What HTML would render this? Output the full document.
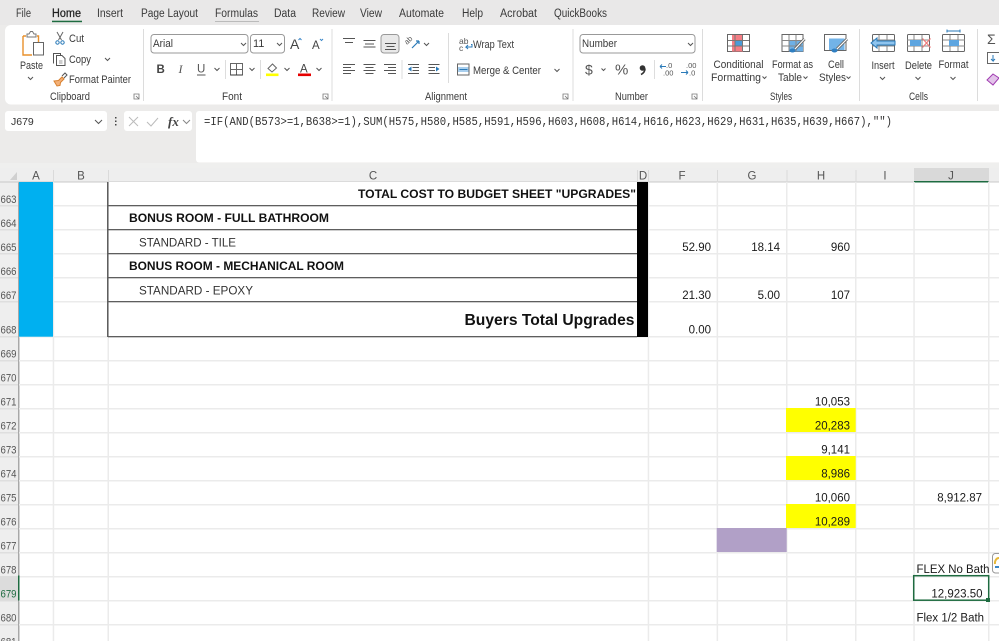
<!DOCTYPE html>
<html><head><meta charset="utf-8"><title>Excel</title>
<style>
html,body{margin:0;padding:0;background:#fff;width:999px;height:641px;overflow:hidden}
svg{display:block}
text{font-family:"Liberation Sans",Arial,sans-serif;fill:#222}
.t{font-size:11px;fill:#3a3a3a}
.tab{font-size:11.5px;fill:#3a3a3a}
.c{font-size:11.5px;fill:#1a1a1a}
.b{font-weight:bold;font-size:12px;fill:#111}
.h{font-size:11.5px;fill:#555}
.r{font-size:11px;fill:#555}
.ic{fill:none;stroke:#555;stroke-width:1}
.d{fill:none;stroke:#777;stroke-width:.8}
</style></head><body>
<svg width="999" height="641" viewBox="0 0 999 641" xmlns="http://www.w3.org/2000/svg">
<rect width="999" height="641" fill="#fff"/>
<!-- top chrome -->
<rect width="999" height="168" fill="#ecebea"/>
<rect x="0" y="0" width="999" height="25" fill="#e9e8e8"/>
<text class="tab" x="16" y="17" textLength="15" lengthAdjust="spacingAndGlyphs">File</text>
<text class="tab" x="52" y="17" textLength="29" lengthAdjust="spacingAndGlyphs" style="fill:#222;stroke:#222;stroke-width:.25">Home</text>
<rect x="52" y="20.700" width="30" height="1.500" fill="#1e6b40"/>
<text class="tab" x="97" y="17" textLength="26" lengthAdjust="spacingAndGlyphs">Insert</text>
<text class="tab" x="141" y="17" textLength="57" lengthAdjust="spacingAndGlyphs">Page Layout</text>
<text class="tab" x="215" y="17" textLength="43" lengthAdjust="spacingAndGlyphs">Formulas</text>
<rect x="215" y="21" width="44" height="1" fill="#bbb"/>
<text class="tab" x="274" y="17" textLength="22" lengthAdjust="spacingAndGlyphs">Data</text>
<text class="tab" x="312" y="17" textLength="33" lengthAdjust="spacingAndGlyphs">Review</text>
<text class="tab" x="360" y="17" textLength="22" lengthAdjust="spacingAndGlyphs">View</text>
<text class="tab" x="399" y="17" textLength="45" lengthAdjust="spacingAndGlyphs">Automate</text>
<text class="tab" x="462" y="17" textLength="21" lengthAdjust="spacingAndGlyphs">Help</text>
<text class="tab" x="500" y="17" textLength="37" lengthAdjust="spacingAndGlyphs">Acrobat</text>
<text class="tab" x="554" y="17" textLength="53" lengthAdjust="spacingAndGlyphs">QuickBooks</text>
<!-- ribbon -->
<rect x="5" y="25" width="1000" height="79.500" rx="6" fill="#fff"/>
<g fill="#dcdcdc">
<rect x="143" y="29" width="1" height="72"/><rect x="331.500" y="29" width="1" height="72"/><rect x="572.500" y="29" width="1" height="72"/>
<rect x="702" y="29" width="1" height="72"/><rect x="859" y="29" width="1" height="72"/><rect x="977" y="29" width="1" height="72"/>
<rect x="448" y="33" width="1" height="50"/>
</g>
<!-- clipboard -->
<path d="M23 36h3M37 36h1.500v6M23 36v19h9" fill="none" stroke="#e8902c" stroke-width="1.400"/>
<path d="M27 37v-3h2l1.500-2.500h2l1.500 2.500h2v3z" fill="#fff" stroke="#777"/>
<rect x="33.500" y="42.500" width="10" height="12.500" fill="#fff" stroke="#666"/>
<text class="t" x="20" y="69" textLength="23" lengthAdjust="spacingAndGlyphs">Paste</text>
<path d="M28 77l2.500 2.500 2.500-2.500" class="ic"/>
<path d="M57 32l4.500 8M63 32l-4.500 8" fill="none" stroke="#666"/><circle cx="57.500" cy="42.500" r="1.700" fill="none" stroke="#2a7ab8"/><circle cx="62.500" cy="42.500" r="1.700" fill="none" stroke="#2a7ab8"/>
<text class="t" x="69" y="42" textLength="15" lengthAdjust="spacingAndGlyphs">Cut</text>
<path d="M53.500 63.500v-10h7v2M56.500 55.500h5.500l3 3v7h-8.500z" class="ic"/><path d="M59 61h3.500M59 63h3.500" stroke="#999" fill="none"/>
<text class="t" x="69" y="63" textLength="22" lengthAdjust="spacingAndGlyphs">Copy</text>
<path d="M105 58l2.500 2.500 2.500-2.500" class="ic"/>
<path d="M54 81l4.500-.5 3.500-3.500 2 2-3.500 3.500-.5 3-3 .5z" fill="#f3b179" stroke="#d9802e"/><path d="M62 76l3-3 2 2-3 3" fill="none" stroke="#555"/>
<text class="t" x="69" y="83" textLength="62" lengthAdjust="spacingAndGlyphs">Format Painter</text>
<text class="t" x="50" y="100" textLength="40" lengthAdjust="spacingAndGlyphs">Clipboard</text>
<path d="M134 94h5v5h-5zM136 96l3 3" class="d"/>
<!-- font -->
<rect x="151" y="34.500" width="97" height="18.500" rx="3" fill="#fff" stroke="#999"/>
<text class="t" x="153" y="47" textLength="20" lengthAdjust="spacingAndGlyphs">Arial</text>
<path d="M241 43l2.500 2.500 2.500-2.500" class="ic"/>
<rect x="250.500" y="34.500" width="34" height="18.500" rx="3" fill="#fff" stroke="#999"/>
<text class="t" x="253" y="47">11</text>
<path d="M277 43l2.500 2.500 2.500-2.500" class="ic"/>
<text x="290" y="49" style="font-size:14px;fill:#444">A</text><path d="M298.500 40l1.500-1.500 1.500 1.500" fill="none" stroke="#3a87c8"/>
<text x="312" y="49" style="font-size:11.500px;fill:#444">A</text><path d="M320 39l1.500 1.500 1.500-1.500" fill="none" stroke="#3a87c8"/>
<text x="156.500" y="73" style="font-size:11.500px;font-weight:bold;fill:#444">B</text>
<text x="178.500" y="73" style="font-size:12px;font-style:italic;fill:#555;font-family:'Liberation Serif',serif">I</text>
<text x="197" y="72.500" style="font-size:11.500px;fill:#555">U</text><rect x="197" y="74.500" width="8.500" height="1" fill="#555"/>
<path d="M214.500 68l2.500 2.500 2.500-2.500M249.500 68l2.500 2.500 2.500-2.500M284.500 68l2.500 2.500 2.500-2.500M316.500 68l2.500 2.500 2.500-2.500" class="ic"/>
<rect x="225" y="60" width="1" height="19" fill="#ddd"/><rect x="260" y="60" width="1" height="19" fill="#ddd"/>
<path d="M230.500 63.500h12v11.500h-12zM236.500 63.500v11.500M230.500 69.500h12" fill="none" stroke="#666"/><path d="M230.500 75h12" stroke="#333"/>
<path d="M268 68.500l4.500-4.500 4 4-4.500 4z" fill="#fff" stroke="#666"/>
<rect x="266" y="73.500" width="12.500" height="2.600" fill="#ffff00"/>
<text x="300" y="72.500" style="font-size:11.500px;fill:#444">A</text><rect x="298" y="73.500" width="13" height="2.600" fill="#e60000"/>
<text class="t" x="222" y="100" textLength="20" lengthAdjust="spacingAndGlyphs">Font</text>
<path d="M323 94h5v5h-5zM325 96l3 3" class="d"/>
<!-- alignment -->
<path d="M343 38.500h12M345 42.500h8M363.500 40.500h12M365 44h9M363.500 47h12" class="ic"/>
<rect x="381" y="34.500" width="18" height="18.500" rx="3" fill="#e9e9e9" stroke="#999"/>
<path d="M385 43.500h11M386.500 46.500h8M385 49.500h11" class="ic"/>
<path d="M343 64.500h12M343 67.500h8M343 70.500h12M343 73.500h8M363.500 64.500h12M365.500 67.500h8M363.500 70.500h12M365.500 73.500h8M384 64.500h12M388 67.500h8M384 70.500h12M388 73.500h8" class="ic"/>
<path d="M408 64.500h11M412.500 67.500h6.500M412.500 70.500h6.500M408 73.500h11M428.500 64.500h11M428.500 67.500h6.500M428.500 70.500h6.500M428.500 73.500h11" class="ic"/>
<path d="M408 69l3.500-2.500v5zM439.500 69l-3.500-2.500v5z" fill="#2a7ab8"/>
<rect x="401.500" y="60" width="1" height="19" fill="#ddd"/>
<path d="M412 48l7-7M419 41h-3M419 41v3" fill="none" stroke="#2a7ab8" stroke-width="1.200"/>
<text x="407" y="45" transform="rotate(-45 407 45)" style="font-size:7.500px;fill:#555">ab</text>
<path d="M424 43l2.500 2.500 2.500-2.500" class="ic"/>
<text x="459" y="44" style="font-size:8.500px;fill:#555">ab</text><text x="459" y="51" style="font-size:8.500px;fill:#555">c</text>
<path d="M471 44.500h1v2.500h-6l2-2M466 47l2 2" fill="none" stroke="#2a7ab8"/>
<text class="t" x="473" y="48" textLength="41" lengthAdjust="spacingAndGlyphs">Wrap Text</text>
<rect x="457.500" y="64" width="11.500" height="11" fill="#fff" stroke="#666"/><rect x="458" y="67" width="10.500" height="5" fill="#a9cfee"/><path d="M459.500 69.500h8" stroke="#2a7ab8"/>
<text class="t" x="473" y="74" textLength="68" lengthAdjust="spacingAndGlyphs">Merge &amp; Center</text>
<path d="M554.500 69l2.500 2.500 2.500-2.500" class="ic"/>
<text class="t" x="425" y="100" textLength="42" lengthAdjust="spacingAndGlyphs">Alignment</text>
<path d="M563 94h5v5h-5zM565 96l3 3" class="d"/>
<!-- number -->
<rect x="580" y="34.500" width="115" height="18.500" rx="3" fill="#fff" stroke="#999"/>
<text class="t" x="582" y="47" textLength="35" lengthAdjust="spacingAndGlyphs">Number</text>
<path d="M688 43l2.500 2.500 2.500-2.500" class="ic"/>
<text x="585" y="74.500" style="font-size:14px;fill:#555">$</text>
<path d="M601.500 68.500l2 2 2-2" class="ic"/>
<text x="615" y="74.500" style="font-size:15px;fill:#555">%</text>
<circle cx="642.500" cy="68" r="2.800" fill="#333"/><path d="M645 68.500q0 4-4 6" fill="none" stroke="#333" stroke-width="1.600"/>
<rect x="654" y="60" width="1" height="19" fill="#ddd"/>
<text x="666" y="68" style="font-size:7.500px;fill:#555">.0</text><text x="663" y="75.500" style="font-size:7.500px;fill:#555">.00</text><path d="M660 66.500h6M660 66.500l2-2M660 66.500l2 2" fill="none" stroke="#2a7ab8"/>
<text x="686" y="68" style="font-size:7.500px;fill:#555">.00</text><text x="689" y="75.500" style="font-size:7.500px;fill:#555">.0</text><path d="M681 72.500h7M688 72.500l-2-2M688 72.500l-2 2" fill="none" stroke="#2a7ab8"/>
<text class="t" x="615" y="100" textLength="33" lengthAdjust="spacingAndGlyphs">Number</text>
<path d="M692 94h5v5h-5zM694 96l3 3" class="d"/>
<!-- styles -->
<rect x="727.500" y="34.500" width="22" height="17" fill="#fff" stroke="#666"/>
<rect x="732" y="35" width="10" height="5.500" fill="#f47d84"/><rect x="732" y="46" width="11" height="5.500" fill="#f47d84"/><rect x="732" y="40.500" width="3" height="5.500" fill="#f47d84"/><rect x="735" y="41" width="7" height="4.500" fill="#4a9bd8"/>
<path d="M735 35v16M742.500 35v16M728 40.500h21M728 46h21" stroke="#777" fill="none"/>
<rect x="782" y="34.500" width="21" height="17" fill="#fff" stroke="#666"/>
<rect x="789" y="41" width="14" height="10.500" fill="#6eb0e6"/>
<path d="M789 35v16M796 35v16M782 40.500h21M782 46h21" stroke="#888" fill="none"/>
<path d="M795 49l9.500-10" stroke="#666" stroke-width="3"/><path d="M795 49l9.500-10" stroke="#fff" stroke-width="1.200"/><ellipse cx="792.500" cy="50.500" rx="3" ry="2" fill="#2f7fc2"/>
<rect x="824.500" y="34.500" width="21.500" height="16" fill="#fff" stroke="#666"/>
<rect x="829" y="38.500" width="15.500" height="11.500" fill="#72b3e8"/>
<path d="M837 49l10-10" stroke="#666" stroke-width="3"/><path d="M837 49l10-10" stroke="#fff" stroke-width="1.200"/><ellipse cx="834.500" cy="50.500" rx="3" ry="2" fill="#2f7fc2"/>
<text class="t" x="713.500" y="68" textLength="50" lengthAdjust="spacingAndGlyphs">Conditional</text>
<text class="t" x="711" y="81" textLength="50" lengthAdjust="spacingAndGlyphs">Formatting</text><path d="M762.500 76.500l2 2 2-2" class="ic"/>
<text class="t" x="772" y="68" textLength="41" lengthAdjust="spacingAndGlyphs">Format as</text>
<text class="t" x="778" y="81" textLength="24" lengthAdjust="spacingAndGlyphs">Table</text><path d="M803.500 76.500l2 2 2-2" class="ic"/>
<text class="t" x="828" y="68" textLength="16" lengthAdjust="spacingAndGlyphs">Cell</text>
<text class="t" x="819" y="81" textLength="27" lengthAdjust="spacingAndGlyphs">Styles</text><path d="M846.500 76.500l2 2 2-2" class="ic"/>
<text class="t" x="770" y="100" textLength="22" lengthAdjust="spacingAndGlyphs">Styles</text>
<!-- cells -->
<rect x="872.500" y="34.500" width="22" height="17" rx="1" fill="#fff" stroke="#666"/><path d="M872 40h22M872 46h22M879 35v16M887 35v16" stroke="#888" fill="none"/>
<path d="M871 43l6-5v3h18v4h-18v3z" fill="#8fc4ee" stroke="#2a7ab8"/>
<rect x="907.500" y="34.500" width="22" height="17" rx="1" fill="#fff" stroke="#666"/><path d="M907 40h22M907 46h22M914 35v16M922 35v16" stroke="#888" fill="none"/>
<rect x="910" y="40" width="11" height="6" fill="#5da5e0"/>
<path d="M922.500 38.500l8 9M930.500 38.500l-8 9" stroke="#ef7a7a" stroke-width="1.200"/>
<rect x="942.500" y="34.500" width="22" height="17" rx="1" fill="#fff" stroke="#666"/><path d="M943 40h22M943 46h22M950 35v16M958 35v16" stroke="#888" fill="none"/>
<rect x="949" y="40" width="10" height="6" fill="#5da5e0"/><path d="M947 31h13M947 29.500v3M960 29.500v3" stroke="#2a7ab8" fill="none"/>
<text class="t" x="871.500" y="69" textLength="23" lengthAdjust="spacingAndGlyphs">Insert</text><path d="M880 77l2.500 2.500 2.500-2.500" class="ic"/>
<text class="t" x="905" y="69" textLength="27" lengthAdjust="spacingAndGlyphs">Delete</text><path d="M915.500 77l2.500 2.500 2.500-2.500" class="ic"/>
<text class="t" x="938.500" y="68" textLength="30" lengthAdjust="spacingAndGlyphs">Format</text><path d="M950.500 77l2.500 2.500 2.500-2.500" class="ic"/>
<text class="t" x="909" y="100" textLength="19" lengthAdjust="spacingAndGlyphs">Cells</text>
<text x="987" y="44" style="font-size:14px;fill:#555">Σ</text>
<rect x="987.500" y="52.500" width="12" height="11" fill="#fff" stroke="#666"/><path d="M993 55v6l-2-2M993 61l2-2" stroke="#2a7ab8" fill="none"/>
<path d="M987 80l6-6 6 4-6 7z" fill="#e3c3ea" stroke="#a03cb0"/>
<!-- formula bar -->
<rect x="5" y="111" width="102" height="20" rx="3" fill="#fff"/>
<text x="11" y="125" style="font-size:10.500px;fill:#333">J679</text>
<path d="M95 120l3.500 3.500 3.500-3.500" fill="none" stroke="#555"/>
<rect x="115" y="117" width="1.500" height="1.500" fill="#444"/><rect x="115" y="120.500" width="1.500" height="1.500" fill="#444"/><rect x="115" y="124" width="1.500" height="1.500" fill="#444"/>
<rect x="124" y="111" width="68" height="20" rx="3" fill="#fff"/>
<path d="M129 117l9 9M138 117l-9 9M147 122l4 4 7-8" fill="none" stroke="#bbb"/>
<text x="168" y="126" style="font-size:13px;font-style:italic;font-weight:bold;fill:#444;font-family:'Liberation Serif',serif">fx</text>
<path d="M183 120l3.500 3.500 3.500-3.500" fill="none" stroke="#888"/>
<rect x="196" y="111" width="810" height="51.500" rx="3" fill="#fff"/>
<text x="204" y="125" style="font-size:12px;fill:#333;font-family:'Liberation Mono',monospace" textLength="688" lengthAdjust="spacingAndGlyphs">=IF(AND(B573&gt;=1,B638&gt;=1),SUM(H575,H580,H585,H591,H596,H603,H608,H614,H616,H623,H629,H631,H635,H639,H667),"")</text>
<!-- column headers -->
<rect x="0" y="163" width="999" height="5" fill="#efefee"/>
<rect x="0" y="168" width="999" height="14" fill="#eeeeee"/>
<rect x="0" y="182" width="18" height="459" fill="#eeeeee"/>
<rect x="18" y="182" width="1.500" height="459" fill="#a8a8a8"/>
<rect x="0" y="181.500" width="999" height="1" fill="#c8c8c8"/>
<path d="M10 180h7v-8z" fill="#d0d0d0"/>
<g fill="#dadada">
<rect x="53" y="170" width="1" height="11"/><rect x="108" y="170" width="1" height="11"/><rect x="637" y="170" width="1" height="11"/><rect x="648" y="170" width="1" height="11"/><rect x="717" y="170" width="1" height="11"/><rect x="786.500" y="170" width="1" height="11"/><rect x="855.500" y="170" width="1" height="11"/>
</g>
<rect x="914" y="168" width="75" height="14" fill="#d9d9d9"/>
<rect x="914" y="181" width="74.500" height="1.500" fill="#1e6b40"/>
<text class="h" text-anchor="middle" x="36" y="179.500">A</text><text class="h" text-anchor="middle" x="81" y="179.500">B</text><text class="h" text-anchor="middle" x="373" y="179.500">C</text><text class="h" text-anchor="middle" x="643" y="179.500">D</text><text class="h" text-anchor="middle" x="682" y="179.500">F</text><text class="h" text-anchor="middle" x="752" y="179.500">G</text><text class="h" text-anchor="middle" x="821" y="179.500">H</text><text class="h" text-anchor="middle" x="885" y="179.500">I</text><text class="h" text-anchor="middle" x="951" y="179.500">J</text>
<!-- grid lines -->
<g fill="#ebebeb">
<rect x="52.700" y="182" width="1.500" height="459"/><rect x="107.500" y="182" width="1.500" height="459"/><rect x="647.700" y="182" width="1.500" height="459"/><rect x="716.600" y="182" width="1.500" height="459"/><rect x="786" y="182" width="1.500" height="459"/><rect x="855" y="182" width="1.500" height="459"/><rect x="913.300" y="182" width="1.500" height="459"/><rect x="988" y="182" width="1.500" height="459"/>
<rect x="19" y="205" width="980" height="1.500"/><rect x="19" y="229" width="980" height="1.500"/><rect x="19" y="253" width="980" height="1.500"/><rect x="19" y="277" width="980" height="1.500"/><rect x="19" y="301" width="980" height="1.500"/><rect x="19" y="336" width="980" height="1.500"/><rect x="19" y="360" width="980" height="1.500"/><rect x="19" y="384" width="980" height="1.500"/><rect x="19" y="408" width="980" height="1.500"/><rect x="19" y="432" width="980" height="1.500"/><rect x="19" y="456" width="980" height="1.500"/><rect x="19" y="480" width="980" height="1.500"/><rect x="19" y="504" width="980" height="1.500"/><rect x="19" y="528" width="980" height="1.500"/><rect x="19" y="552" width="980" height="1.500"/><rect x="19" y="576" width="980" height="1.500"/><rect x="19" y="600" width="980" height="1.500"/><rect x="19" y="624" width="980" height="1.500"/>
</g>
<g fill="#dedede">
<rect x="0" y="205" width="18" height="1.500"/><rect x="0" y="229" width="18" height="1.500"/><rect x="0" y="253" width="18" height="1.500"/><rect x="0" y="277" width="18" height="1.500"/><rect x="0" y="301" width="18" height="1.500"/><rect x="0" y="336" width="18" height="1.500"/><rect x="0" y="360" width="18" height="1.500"/><rect x="0" y="384" width="18" height="1.500"/><rect x="0" y="408" width="18" height="1.500"/><rect x="0" y="432" width="18" height="1.500"/><rect x="0" y="456" width="18" height="1.500"/><rect x="0" y="480" width="18" height="1.500"/><rect x="0" y="504" width="18" height="1.500"/><rect x="0" y="528" width="18" height="1.500"/><rect x="0" y="552" width="18" height="1.500"/><rect x="0" y="600" width="18" height="1.500"/><rect x="0" y="624" width="18" height="1.500"/>
</g>
<rect x="0" y="576" width="18" height="24.500" fill="#dcdcdc"/>
<!-- row numbers -->
<text class="r" x="0.500" y="203" textLength="16" lengthAdjust="spacingAndGlyphs">663</text>
<text class="r" x="0.500" y="227" textLength="16" lengthAdjust="spacingAndGlyphs">664</text>
<text class="r" x="0.500" y="251" textLength="16" lengthAdjust="spacingAndGlyphs">665</text>
<text class="r" x="0.500" y="275" textLength="16" lengthAdjust="spacingAndGlyphs">666</text>
<text class="r" x="0.500" y="299" textLength="16" lengthAdjust="spacingAndGlyphs">667</text>
<text class="r" x="0.500" y="333.500" textLength="16" lengthAdjust="spacingAndGlyphs">668</text>
<text class="r" x="0.500" y="357.500" textLength="16" lengthAdjust="spacingAndGlyphs">669</text>
<text class="r" x="0.500" y="381.500" textLength="16" lengthAdjust="spacingAndGlyphs">670</text>
<text class="r" x="0.500" y="405.500" textLength="16" lengthAdjust="spacingAndGlyphs">671</text>
<text class="r" x="0.500" y="429.500" textLength="16" lengthAdjust="spacingAndGlyphs">672</text>
<text class="r" x="0.500" y="453.500" textLength="16" lengthAdjust="spacingAndGlyphs">673</text>
<text class="r" x="0.500" y="477.500" textLength="16" lengthAdjust="spacingAndGlyphs">674</text>
<text class="r" x="0.500" y="501.500" textLength="16" lengthAdjust="spacingAndGlyphs">675</text>
<text class="r" x="0.500" y="525.500" textLength="16" lengthAdjust="spacingAndGlyphs">676</text>
<text class="r" x="0.500" y="549.500" textLength="16" lengthAdjust="spacingAndGlyphs">677</text>
<text class="r" x="0.500" y="573.500" textLength="16" lengthAdjust="spacingAndGlyphs">678</text>
<text class="r" x="0.500" y="597.500" textLength="16" lengthAdjust="spacingAndGlyphs" style="fill:#1e6b40">679</text>
<text class="r" x="0.500" y="621.500" textLength="16" lengthAdjust="spacingAndGlyphs">680</text>
<text class="r" x="0.500" y="645.500" textLength="16" lengthAdjust="spacingAndGlyphs">681</text>
<rect x="18" y="575.500" width="1.500" height="25" fill="#1e6b40"/>
<!-- fills -->
<rect x="19" y="182" width="34" height="154.700" fill="#00b0f0"/>
<rect x="786" y="408" width="69.700" height="24" fill="#ffff00"/>
<rect x="786" y="456" width="69.700" height="24" fill="#ffff00"/>
<rect x="786" y="504" width="69.700" height="24" fill="#ffff00"/>
<rect x="716.700" y="528" width="70" height="24" fill="#b1a0c7"/>
<!-- merged C block -->
<rect x="109" y="182" width="528" height="154" fill="#fff"/>
<g fill="#5e5e5e">
<rect x="107" y="182" width="1.500" height="155"/>
<rect x="108" y="205" width="529" height="1.300"/><rect x="108" y="229" width="529" height="1.300"/><rect x="108" y="253" width="529" height="1.300"/><rect x="108" y="277" width="529" height="1.300"/><rect x="108" y="301" width="529" height="1.300"/><rect x="108" y="336" width="529" height="1.300"/>
</g>
<rect x="637" y="182" width="11" height="155" fill="#000"/>
<text class="b" x="358" y="198" textLength="278" lengthAdjust="spacingAndGlyphs">TOTAL COST TO BUDGET SHEET "UPGRADES"</text>
<text class="b" x="129" y="222" textLength="200" lengthAdjust="spacingAndGlyphs">BONUS ROOM - FULL BATHROOM</text>
<text class="c" x="139" y="246.500" style="font-size:12px;fill:#333" textLength="97" lengthAdjust="spacingAndGlyphs">STANDARD - TILE</text>
<text class="b" x="129" y="270" textLength="215" lengthAdjust="spacingAndGlyphs">BONUS ROOM - MECHANICAL ROOM</text>
<text class="c" x="139" y="294.500" style="font-size:12px;fill:#333" textLength="114" lengthAdjust="spacingAndGlyphs">STANDARD - EPOXY</text>
<text x="464.500" y="325" style="font-size:16px;font-weight:bold;fill:#111" textLength="170" lengthAdjust="spacingAndGlyphs">Buyers Total Upgrades</text>
<!-- values -->
<g text-anchor="end">
<text class="c" x="711" y="251">52.90</text><text class="c" x="780" y="251">18.14</text><text class="c" x="850" y="251">960</text>
<text class="c" x="711" y="299">21.30</text><text class="c" x="780" y="299">5.00</text><text class="c" x="850" y="299">107</text>
<text class="c" x="711" y="333.500">0.00</text>
<text class="c" x="850" y="405.500">10,053</text><text class="c" x="850" y="429.500">20,283</text><text class="c" x="850" y="453.500">9,141</text><text class="c" x="850" y="477.500">8,986</text><text class="c" x="850" y="501.500">10,060</text><text class="c" x="850" y="525.500">10,289</text>
<text class="c" x="982" y="501.500">8,912.87</text>
<text class="c" x="982.500" y="597.500">12,923.50</text>
</g>
<text class="c" x="916.500" y="573" textLength="73" lengthAdjust="spacingAndGlyphs">FLEX No Bath</text>
<text class="c" x="916.500" y="621.500" textLength="67.500" lengthAdjust="spacingAndGlyphs">Flex 1/2 Bath</text>
<!-- selection -->
<rect x="913.700" y="575.700" width="75" height="24.500" fill="none" stroke="#1e6b40" stroke-width="1.500"/>
<rect x="986" y="598" width="4" height="4" fill="#1e6b40"/>
<rect x="992.500" y="553.500" width="12" height="19.500" rx="3" fill="#fff" stroke="#999"/>
<path d="M995 564a4 5 0 0 1 4-6" fill="none" stroke="#e8b93a" stroke-width="2"/>
<path d="M995 567h4" stroke="#3a87c8" stroke-width="2"/>
</svg>
</body></html>
